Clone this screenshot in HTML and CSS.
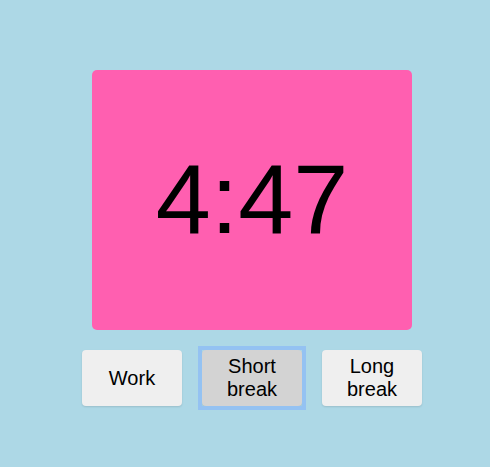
FILE: index.html
```html
<!DOCTYPE html>
<html>
<head>
<meta charset="utf-8">
<link rel="stylesheet" href="styles.css">
</head>
<body>
<div class="app">
  <div class="timer">4:47</div>
  <div class="modes">
    <button class="mode">Work</button>
    <button class="mode active">Short break</button>
    <button class="mode">Long break</button>
  </div>
</div>
</body>
</html>
```
FILE: styles.css
```css
html, body {
  margin: 0;
  background: #add8e6;
  font-family: "Liberation Sans", Arial, sans-serif;
}
.app {
  box-sizing: border-box;
  width: 490px;
  height: 467px;
  padding: 70px 0 0 14px;
  display: flex;
  flex-direction: column;
  align-items: center;
  gap: 20px;
}
.timer {
  width: 320px;
  height: 260px;
  background: #ff5fb0;
  border-radius: 5px;
  display: flex;
  align-items: center;
  justify-content: center;
  font-size: 99px;
  color: #000;
  padding-bottom: 2px;
  box-sizing: border-box;
}
.modes {
  display: flex;
  gap: 20px;
}
.mode {
  position: relative;
  width: 100px;
  height: 56px;
  border: none;
  border-radius: 4px;
  background: #efefef;
  font-family: "Liberation Sans", Arial, sans-serif;
  font-size: 20px;
  line-height: 23px;
  color: #000;
  padding: 0 4px;
  box-shadow: 0 1px 2px rgba(0,0,0,0.12);
}
.mode.active {
  background: #d3d3d3;
}
.mode.active::before {
  content: "";
  position: absolute;
  inset: -4px;
  border: 4px solid #94c2f2;
}
```
